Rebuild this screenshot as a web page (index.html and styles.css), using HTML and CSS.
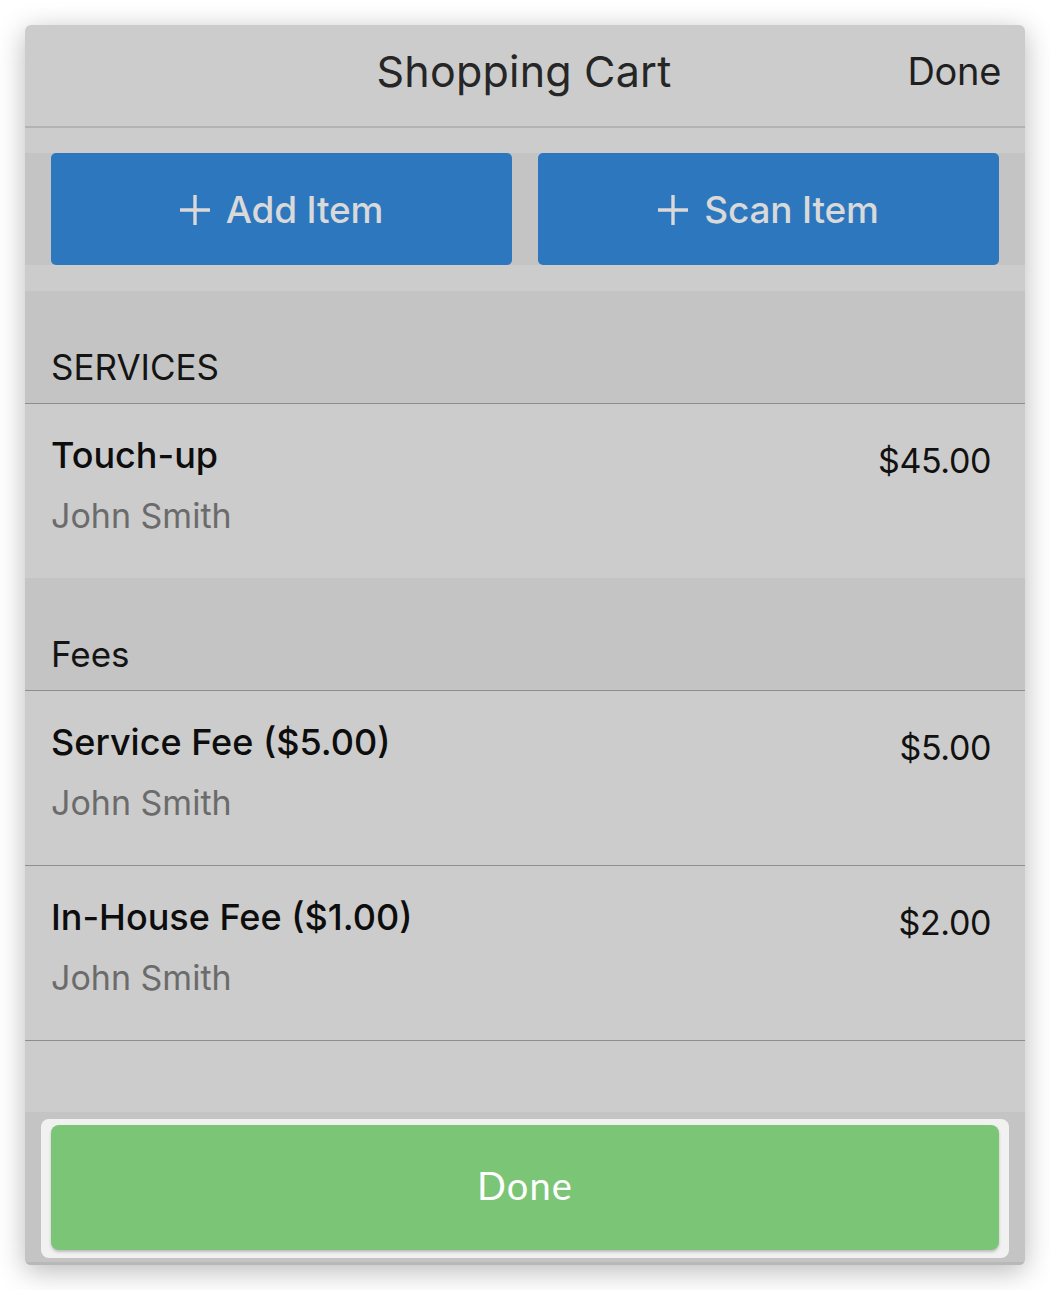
FILE: index.html
```html
<!DOCTYPE html>
<html>
<head>
<meta charset="utf-8">
<link rel="stylesheet" href="styles.css">
</head>
<body>
<div class="card">
  <header class="topbar">
    <div class="title">Shopping Cart</div>
    <div class="top-done">Done</div>
  </header>
  <div class="actions">
    <button class="action-btn"><svg class="plus" viewBox="0 0 30 30"><path d="M15 0V30M0 15H30" stroke="#d9d9d9" stroke-width="3.4" fill="none"/></svg><span>Add Item</span></button>
    <button class="action-btn"><svg class="plus" viewBox="0 0 30 30"><path d="M15 0V30M0 15H30" stroke="#d9d9d9" stroke-width="3.4" fill="none"/></svg><span>Scan Item</span></button>
  </div>
  <div class="section-head">SERVICES</div>
  <div class="row no-border">
    <div class="row-main">
      <div class="row-title">Touch-up</div>
      <div class="row-sub">John Smith</div>
    </div>
    <div class="row-price">$45.00</div>
  </div>
  <div class="section-head">Fees</div>
  <div class="row">
    <div class="row-main">
      <div class="row-title">Service Fee ($5.00)</div>
      <div class="row-sub">John Smith</div>
    </div>
    <div class="row-price">$5.00</div>
  </div>
  <div class="row">
    <div class="row-main">
      <div class="row-title">In-House Fee ($1.00)</div>
      <div class="row-sub">John Smith</div>
    </div>
    <div class="row-price">$2.00</div>
  </div>
  <div class="spacer"></div>
  <footer class="footer">
    <div class="footer-box">
      <button class="done-btn">Done</button>
    </div>
  </footer>
</div>
</body>
</html>
```
FILE: styles.css
```css
* { box-sizing: border-box; }
html, body { margin: 0; padding: 0; background: #ffffff; }
body { font-family: Inter, "Noto Sans", sans-serif; }

.card {
  width: 1000px;
  height: 1240px;
  margin: 25px;
  background: #cccccc;
  border-radius: 6px;
  overflow: hidden;
  box-shadow: 0 6px 28px rgba(0,0,0,0.28);
  display: flex;
  flex-direction: column;
}

.topbar {
  height: 103px;
  flex: none;
  border-bottom: 2px solid #b3b3b3;
  padding-bottom: 9px;
  display: flex;
  align-items: center;
  justify-content: center;
  position: relative;
}
.title {
  font-size: 43px;
  color: #262626;
  font-weight: 400;
  letter-spacing: 0.2px;
  margin-left: -2px;
}
.top-done {
  position: absolute;
  right: 24px;
  top: 0;
  bottom: 9px;
  display: flex;
  align-items: center;
  font-size: 38px;
  color: #1f1f1f;
  letter-spacing: -0.3px;
}

.actions {
  margin-top: 25px;
  margin-bottom: 26px;
  height: 112px;
  flex: none;
  background: #c4c4c4;
  padding: 0 26px;
  display: flex;
  gap: 26px;
}
.action-btn {
  flex: 1;
  border: none;
  border-radius: 5px;
  background: #2d77bf;
  color: #d9d9d9;
  font-family: Inter, "Noto Sans", sans-serif;
  font-size: 37px;
  font-weight: 500;
  letter-spacing: -0.2px;
  display: flex;
  align-items: center;
  justify-content: center;
  gap: 16px;
  padding: 0;
}
.plus { width: 30px; height: 30px; margin-top: 2px; }

.section-head {
  height: 113px;
  flex: none;
  background: #c4c4c4;
  border-bottom: 1px solid #8e8e8e;
  padding: 0 26px 15px;
  display: flex;
  align-items: flex-end;
  font-size: 35px;
  line-height: 42px;
  color: #141414;
}

.row {
  height: 175px;
  flex: none;
  border-bottom: 1px solid #8e8e8e;
  padding: 29px 34px 0 26px;
  display: flex;
  justify-content: space-between;
  align-items: flex-start;
}
.row.no-border { border-bottom: none; height: 174px; }
.row-title {
  font-size: 36px;
  line-height: 44px;
  font-weight: 500;
  color: #0d0d0d;
  letter-spacing: 0px;
}
.row-sub {
  margin-top: 18px;
  font-size: 34px;
  line-height: 42px;
  color: #6b6b6b;
}
.row-price {
  margin-top: 7px;
  font-size: 34px;
  line-height: 42px;
  color: #111111;
  letter-spacing: -0.4px;
}

.spacer { height: 71px; flex: none; }

.footer {
  flex: 1;
  background: #c4c4c4;
  border-bottom: 3px solid #b8b8b8;
  padding: 7px 16px 4px;
  display: flex;
}
.footer-box {
  flex: 1;
  background: #f1f1f1;
  border-radius: 8px;
  padding: 6px 10px 8px;
  display: flex;
}
.done-btn {
  flex: 1;
  border: none;
  border-radius: 8px;
  background: #7bc577;
  box-shadow: 0 2px 3px rgba(0,0,0,0.22);
  color: #ffffff;
  font-family: Lato, "Noto Sans", sans-serif;
  font-size: 38px;
  font-weight: 400;
  letter-spacing: 1.2px;
  padding: 0 0 6px;
}
```
